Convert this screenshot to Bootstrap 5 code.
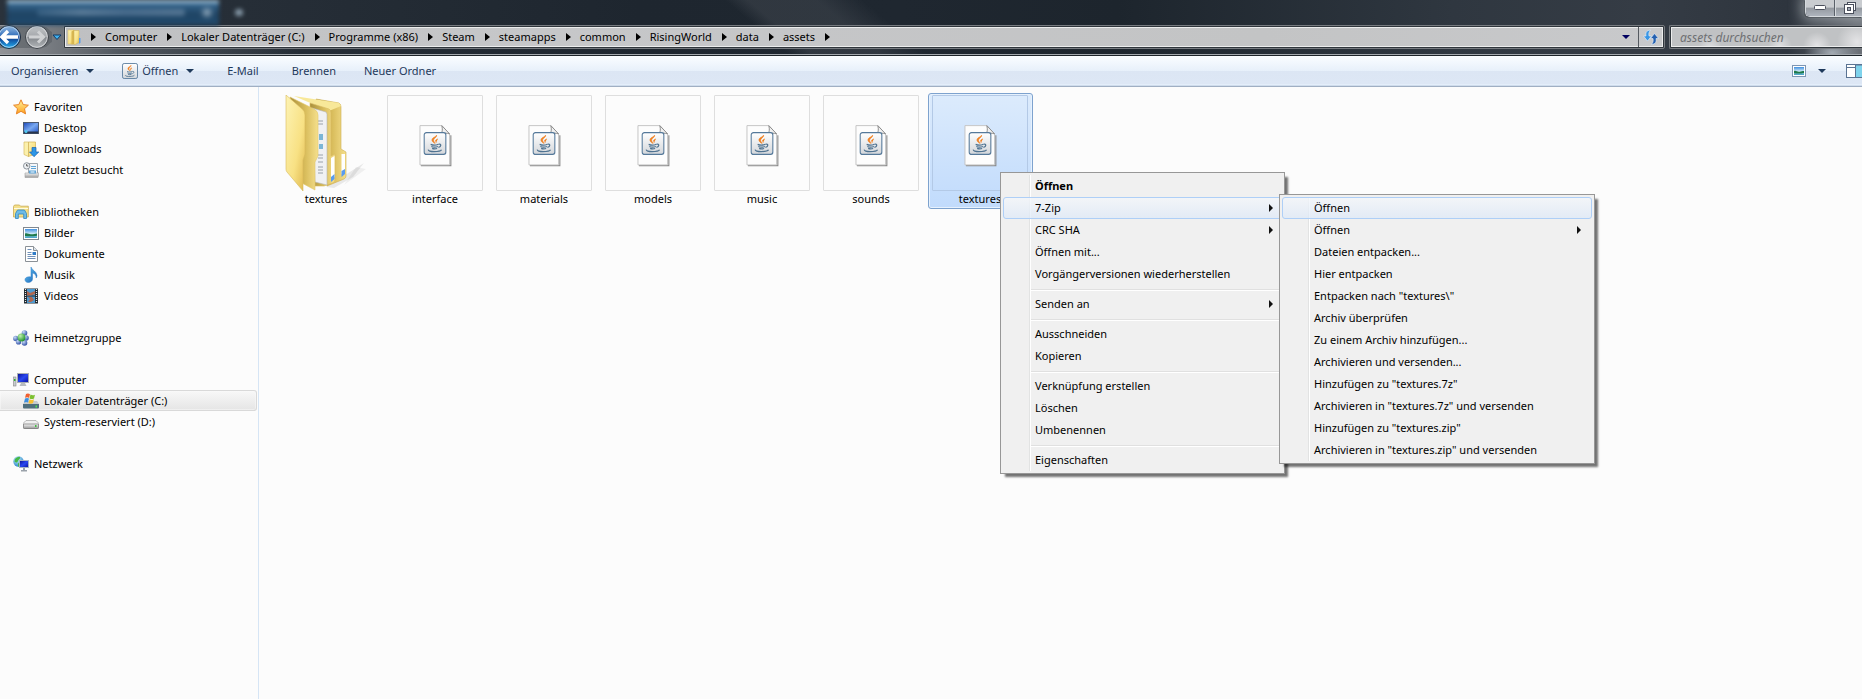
<!DOCTYPE html>
<html lang="de">
<head>
<meta charset="utf-8">
<meta name="viewport" content="width=device-width, initial-scale=1">
<title>assets</title>
<link href="https://cdn.jsdelivr.net/npm/bootstrap@5.3.0/dist/css/bootstrap.min.css" rel="stylesheet">
<style>
  body { font-family: "Noto Sans", "Open Sans", sans-serif; font-size: 11px; line-height: 16px; color: #000; background: #fcfcfc; }
  button { font: inherit; }
  svg { display: block; flex: none; }

  /* Glass frame */
  .glass { height: 56px; border-bottom: 1px solid #1c2329; background:
      radial-gradient(ellipse at 50% 60%, rgba(190,198,206,.75), transparent 65%) right 0 bottom -10px / 60px 30px repeat-x,
      linear-gradient(90deg, rgba(150,152,156,.95) 0, rgba(110,116,122,.6) 120px, rgba(60,68,76,0) 300px) 0 25px no-repeat,
      linear-gradient(40deg, transparent 0 38%, rgba(70,76,84,.45) 41% 50%, transparent 56%) 500px 0 / 700px 56px no-repeat,
      linear-gradient(90deg, #2a323b 0, #252d36 300px, #1e262f 640px, #1f2730 900px, #1d252d 60%, #2f3740 78%, #353c45 88%, #2e353e 96%, #6d7279 100%);
    background-repeat: no-repeat; }
  .glass::after { content: ""; height: 1px; background: #a3a8ad; margin-top: auto; }
  .title-strip { height: 25px; }
  .back-tab { width: 212px; height: 25px; margin-left: 7px; padding-left: 30px; filter: blur(2px); background: linear-gradient(#a9c8dc 0 2px, #34648c 4px, #1f4464 14px, #204a6d); }
  .back-text { width: 148px; height: 7px; border-radius: 3px; background: linear-gradient(90deg, #3c6588, #6c8ca8 30%, #57799a 60%, #6483a0 95%); opacity: .7; }
  .back-dot { width: 8px; height: 7px; border-radius: 4px; background: #a6bccd; filter: blur(2px); }
  .caption-btns { height: 17px; border: 1px solid #d6dade; border-width: 0 0 1px 1px; border-radius: 0 0 0 5px; box-shadow: 0 0 12px 4px rgba(190,195,200,.5), -1px 1px 0 #22282f; }
  .caption-btns button { width: 28px; height: 16px; background: linear-gradient(#c9ccd0 0 45%, #9499a0 50%, #aeb4bd); }
  .caption-btns button + button { border-left: 1px solid #5a6069 !important; box-shadow: inset 1px 0 #d6dade; }
  .nav-strip { height: 24px; }
  .nav-knobs { width: 63px; }
  .glass-box { height: 24px; border: 1px solid #777b80; border-radius: 2px; background: #30363c; padding: 1px; }
  .glass-inner { background: linear-gradient(90deg, #bfc0c2, #c6c7c9 30%, #c3c4c5 75%, #c8c9cb); border: 1px solid #eceded; }
  .search-glass { width: 193px; border-right: 0; border-radius: 2px 0 0 2px; padding-right: 0; }
  .search-glass .glass-inner { border-right: 0; background: radial-gradient(circle at 145px 18px, #e4e4e6 0, transparent 14px), radial-gradient(circle at 108px 18px, #dedfe1 0, transparent 12px), radial-gradient(circle at 38px 20px, #dedfe1 0, transparent 12px), radial-gradient(circle at 185px 14px, #e4e4e6 0, transparent 20px), #c0c2c4; }
  .search-glass input { font-size: 12px; font-style: italic; padding: 0 8px; min-height: 0; border: 0; background: none !important; box-shadow: none !important; }
  .search-glass input::placeholder { color: #6e7073; opacity: 1; }
  .crumb { padding: 0 10px 0 9px; color: #000; text-decoration: none; }
  .crumb-tri { width: 0; height: 0; border: 4px solid transparent; border-left: 5px solid #000; border-right: 0; }
  .down-tri { width: 0; height: 0; border: 4px solid transparent; border-top: 4px solid #1e395b; border-bottom: 0; }
  .down-tri.navy { border-top-color: #000060; }
  .refresh { width: 24px; height: 20px; border-left: 1px solid #555a60 !important; }

  /* Command bar */
  .cmd-bar { height: 31px; border-bottom: 1px solid #a0afc3; background: linear-gradient(#fafdff 0, #f0f6fd 8px, #e7f0fa 15px, #dce6f4 15px, #dde7f5 28px, #e4eefa 28px); box-shadow: inset 0 -1px #cfdcec; padding-left: 11px; }
  .cmd-bar button { color: #1e395b; }
  .cmd-bar .cmd-gap { margin-right: 28px; }
  .cmd-bar .cmd-wide { margin-right: 33px; }

  /* Navigation pane */
  .side { width: 259px; border-right: 1px solid #d6e5f5; padding-top: 9px; }
  .side ul { margin-bottom: 21px; }
  .side a { height: 21px; padding-left: 13px; gap: 5px; color: #000; text-decoration: none; }
  .side li li a { padding-left: 23px; }
  .side .picked { margin-right: 1px; border: 1px solid #d9d9d9; border-left: 0; border-radius: 0 3px 3px 0; background: linear-gradient(#f8f8f8, #e5e5e5); box-shadow: inset 0 0 0 1px #fafafa80; }

  /* Files */
  .files { padding: 6px 0 0 15px; gap: 4px; }
  .file { width: 105px; height: 116px; padding: 1px 4px 1px 3px; border: 1px solid transparent; border-radius: 3px; }
  .thumb { width: 96px; height: 96px; border: 1px solid #dedede; border-radius: 1px; }
  .thumb.bare { border: 0; }
  .file.chosen { border-color: #7da2ce; background: linear-gradient(#dcebfc, #c1dbfc); box-shadow: inset 0 0 0 1px #e6f1fd; }
  .file.chosen .thumb { border-color: #b3c9e6; }

  /* Context menus */
  .ctx { --bs-dropdown-font-size: 11px; left: 71px; top: 78px; width: 285px; padding: 2px; border: 1px solid #979797; border-radius: 0; color: #000;
    background: linear-gradient(90deg, transparent 26px, #e2e3e3 26px 27px, #fff 27px 28px, transparent 28px) content-box, #f0f0f0; box-shadow: 4px 4px 2px -1px rgba(0,0,0,.55); }
  .ctx .ctx { left: 276px; top: -3px; width: 316px; }
  .ctx .dropdown-item { height: 22px; padding: 0 8px 0 31px; border: 1px solid transparent; color: #000; line-height: 20px; }
  .ctx .ctx .dropdown-item { padding-right: 10px; }
  .ctx .dropdown-item.hot { border-color: #aecff7; border-radius: 3px; background: linear-gradient(rgba(243,246,250,.8), rgba(221,233,248,.7)); }
  .ctx .dropdown-divider { height: 2px; margin: 4px 0 2px 28px; border-top: 1px solid #e0e0e0; background: #fff; opacity: 1; }
  .ctx .crumb-tri { border-left-width: 4px; border-left-color: #111; }
</style>
</head>
<body class="d-flex flex-column vh-100 overflow-hidden">

<svg width="0" height="0" class="position-absolute" aria-hidden="true">
  <defs>
    <linearGradient id="gBack" x1="0" y1="0" x2="0" y2="1"><stop offset="0" stop-color="#9cc0e6"/><stop offset=".42" stop-color="#3a74bd"/><stop offset=".5" stop-color="#0c3488"/><stop offset="1" stop-color="#25b4f4"/></linearGradient>
    <linearGradient id="gFwd" x1="0" y1="0" x2="0" y2="1"><stop offset="0" stop-color="#c3c6c9"/><stop offset=".48" stop-color="#a5a8ac"/><stop offset=".52" stop-color="#83878c"/><stop offset="1" stop-color="#b4b8bb"/></linearGradient>
    <linearGradient id="gFolder" x1="0" y1="0" x2="1" y2="1"><stop offset="0" stop-color="#fdf3b4"/><stop offset=".6" stop-color="#f8e184"/><stop offset="1" stop-color="#dfb84e"/></linearGradient>
    <linearGradient id="gFolderD" x1="0" y1="0" x2="1" y2="0"><stop offset="0" stop-color="#a98f3c"/><stop offset=".55" stop-color="#d9bd5c"/><stop offset="1" stop-color="#f5df8c"/></linearGradient>
    <linearGradient id="gStar" x1="0" y1="0" x2="0" y2="1"><stop offset="0" stop-color="#fff3a0"/><stop offset="1" stop-color="#ffa11c"/></linearGradient>
    <linearGradient id="gScreen" x1="0" y1="0" x2="1" y2="1"><stop offset="0" stop-color="#1b46b8"/><stop offset=".5" stop-color="#78a8f0"/><stop offset="1" stop-color="#1c4cc0"/></linearGradient>
    <linearGradient id="gDark" x1="0" y1="0" x2="1" y2="1"><stop offset="0" stop-color="#0a0f90"/><stop offset=".5" stop-color="#2a48f0"/><stop offset="1" stop-color="#0a10a0"/></linearGradient>
    <linearGradient id="gMetal" x1="0" y1="0" x2="0" y2="1"><stop offset="0" stop-color="#f4f4f4"/><stop offset="1" stop-color="#9a9a9a"/></linearGradient>
    <linearGradient id="gArrow" x1="0" y1="0" x2="1" y2="1"><stop offset="0" stop-color="#6fd0fa"/><stop offset="1" stop-color="#0f58b0"/></linearGradient>
    <linearGradient id="gSky" x1="0" y1="0" x2="0" y2="1"><stop offset="0" stop-color="#3f8fe0"/><stop offset=".6" stop-color="#e4f6fb"/><stop offset=".7" stop-color="#8fd0e4"/><stop offset="1" stop-color="#3f9cc4"/></linearGradient>
    <linearGradient id="gJava" x1="0" y1="0" x2="0" y2="1"><stop offset="0" stop-color="#fff"/><stop offset="1" stop-color="#d3d6da"/></linearGradient>
    <radialGradient id="gBallB" cx=".35" cy=".3" r=".8"><stop offset="0" stop-color="#c8dcf8"/><stop offset="1" stop-color="#20409c"/></radialGradient>
    <radialGradient id="gBallG" cx=".35" cy=".3" r=".8"><stop offset="0" stop-color="#c0f0b0"/><stop offset="1" stop-color="#128a20"/></radialGradient>
    <radialGradient id="gGlobe" cx=".4" cy=".3" r=".8"><stop offset="0" stop-color="#c0f0f8"/><stop offset="1" stop-color="#1a78c8"/></radialGradient>
    <symbol id="photo" viewBox="0 0 12 9" preserveAspectRatio="none">
      <path d="M0 0h12v9H0z" fill="url(#gSky)"/><path d="M0 4.500c2-1 3.500.5 6 .8 2 .2 4-.8 6-.8v2.200c-4 .8-8 .8-12 .3z" fill="#1f7a4c"/>
    </symbol>
    <symbol id="java" viewBox="0 0 24 24">
      <rect x=".75" y=".75" width="22.5" height="22.5" rx="2.5" fill="url(#gJava)" stroke="#55799a" stroke-width="1.3"/>
      <path d="M13.6 3.4c.7 2.2-4.3 3.6-2.9 6.2.4.9 1 1.300 1 2.200-2-1.300-3.700-3-2.500-4.700 1.100-1.500 3.900-2.200 4.400-3.700zM15 7.200c-1.600.6-2.900 1.300-2.300 2.400.5.900.5 1.500-.1 2.100" fill="#f08020" stroke="#f08020" stroke-width=".7"/>
      <path d="M7.500 12.800c2 .9 6 .8 8-.1M8.200 15c2 .9 5 .8 6.800 0M9 17c1.600.7 3.800.6 5.200.1M15.700 12.700c3-.8 3 2.500-.2 3.200M5.300 18.200c-1.500 2.700 12.200 2.600 13.400.1" fill="none" stroke="#4f7391" stroke-width="1.300"/>
    </symbol>
    <symbol id="jar" viewBox="0 0 34 43">
      <path d="M2 42.300h30.800V11" fill="none" stroke="#8d8d8d" stroke-width="1.200"/>
      <path d="M1 1h22.500l8 8.500v32H1z" fill="#fdfdfd" stroke="#c4c4c4"/>
      <path d="M23.500 1c1 4 .5 6-.5 8.500 3-1 6-.8 8.500 0z" fill="#f0f0f0" stroke="#8a8a8a"/>
      <use href="#java" x="4.500" y="7.500" width="24" height="24"/>
    </symbol>
  </defs>
</svg>

<header class="glass d-flex flex-column flex-shrink-0">
  <div class="title-strip d-flex justify-content-between">
    <div class="d-flex align-items-center">
      <div class="back-tab d-flex align-items-center justify-content-between pe-2"><div class="back-text"></div><div class="back-dot"></div></div>
      <div class="back-dot ms-3 opacity-75"></div>
    </div>
    <div class="caption-btns d-flex overflow-hidden">
      <button class="border-0 p-0 d-flex align-items-center justify-content-center" aria-label="Minimieren"><svg width="12" height="6"><rect x=".5" y=".5" width="11" height="4" rx="1" fill="#fff" stroke="#4a4f5c"/></svg></button>
      <button class="border-0 p-0 d-flex align-items-center ps-1" aria-label="Verkleinern"><svg class="ms-1" width="14" height="14"><rect x="4.500" y="1.500" width="8" height="8" fill="#fff" stroke="#4a4f5c"/><rect x="1.500" y="3.500" width="9" height="9" fill="#fff" stroke="#4a4f5c"/><rect x="4.500" y="6.500" width="3" height="3" fill="#a4abb8" stroke="#4a4f5c"/></svg></button>
    </div>
  </div>
  <div class="nav-strip d-flex">
    <svg class="nav-knobs" height="24" viewBox="0 0 63 24" role="img" aria-label="Zurück und Vorwärts">
      <path d="M0 1h40c8 0 8 4 12 6v10c-4 2-4 6-12 6H0z" fill="#53595f" opacity=".55"/>
      <circle cx="9" cy="12" r="11.500" fill="url(#gBack)" stroke="#26303c"/><circle cx="9" cy="12" r="10.300" fill="none" stroke="#c4dcf2" stroke-width=".8"/>
      <path d="M8 6 2 12 8 18M2.500 12H18" fill="none" stroke="#fff" stroke-width="3.400"/>
      <circle cx="37" cy="12" r="11.500" fill="url(#gFwd)" stroke="#3f444a"/><circle cx="37" cy="12" r="10.300" fill="none" stroke="#dadcde" stroke-width=".8"/>
      <path d="M38 6.500 43.500 12 38 17.500M43 12H29" fill="none" stroke="#cfd1d3" stroke-width="3"/>
      <path d="M53 10h8l-4 4.500z" fill="#3fb2f0" stroke="#123a66"/>
    </svg>
    <div class="glass-box d-flex flex-fill">
      <nav class="glass-inner d-flex flex-fill align-items-center" aria-label="Adresse">
        <svg class="me-2" width="17" height="16" viewBox="0 0 17 16"><path d="M2 1h6v14H2z" fill="url(#gFolder)" stroke="#d8b95c" stroke-width=".5"/><path d="M5.500 2.500 8 1v14l-2.500.5z" fill="#d8b650"/><path d="M8 1.500h5v12L9 15.500H8z" fill="url(#gFolder)" stroke="#cfae4f" stroke-width=".5"/><path d="M13 9h1.500v4.500L13 15z" fill="#5a9be8"/></svg>
        <span class="crumb-tri"></span><a class="crumb" href="#">Computer</a>
        <span class="crumb-tri"></span><a class="crumb" href="#">Lokaler Datenträger (C:)</a>
        <span class="crumb-tri"></span><a class="crumb" href="#">Programme (x86)</a>
        <span class="crumb-tri"></span><a class="crumb" href="#">Steam</a>
        <span class="crumb-tri"></span><a class="crumb" href="#">steamapps</a>
        <span class="crumb-tri"></span><a class="crumb" href="#">common</a>
        <span class="crumb-tri"></span><a class="crumb" href="#">RisingWorld</a>
        <span class="crumb-tri"></span><a class="crumb" href="#">data</a>
        <span class="crumb-tri"></span><a class="crumb" href="#">assets</a>
        <span class="crumb-tri"></span>
        <button class="btn p-0 border-0 ms-auto px-1 me-1" aria-label="Verlauf"><span class="down-tri navy d-block"></span></button>
        <button class="refresh border-0 bg-transparent p-0 ps-1 d-flex align-items-center" aria-label="Aktualisieren">
          <svg width="16" height="16" viewBox="0 0 16 16"><path d="M7.500 1C3 1.500 2.500 4 3 7H.5l4 5 4-5H6C5.500 4.500 6 3 7.500 1z" fill="#3a96e4" stroke="#e8f2fb" stroke-width=".6"/><path d="M8.500 15.500c4.500-.5 5-3 4.500-6h2.500l-4-5-4 5H10c.5 2.500 0 4-1.500 6z" fill="#2460b0" stroke="#e8f2fb" stroke-width=".6"/></svg>
        </button>
      </nav>
    </div>
    <div class="glass-box search-glass d-flex ms-1">
      <div class="glass-inner d-flex flex-fill"><input class="form-control rounded-0 h-100" type="text" placeholder="assets durchsuchen" aria-label="assets durchsuchen"></div>
    </div>
  </div>
</header>

<div class="cmd-bar d-flex align-items-center flex-shrink-0" role="toolbar" aria-label="Befehle">
  <button class="border-0 bg-transparent p-0 d-flex align-items-center cmd-gap gap-2 flex-shrink-0">Organisieren<span class="down-tri"></span></button>
  <button class="border-0 bg-transparent p-0 d-flex align-items-center cmd-wide flex-shrink-0"><svg class="me-1" width="16" height="16"><use href="#java"/></svg>Öffnen<span class="down-tri ms-2"></span></button>
  <button class="border-0 bg-transparent p-0 cmd-wide flex-shrink-0">E-Mail</button>
  <button class="border-0 bg-transparent p-0 cmd-gap flex-shrink-0">Brennen</button>
  <button class="border-0 bg-transparent p-0 flex-shrink-0">Neuer Ordner</button>
  <button class="border-0 bg-transparent p-0 ms-auto me-3 d-flex align-items-center" aria-label="Ansicht ändern"><svg class="me-2" width="14" height="12"><rect x=".5" y=".5" width="13" height="11" fill="#fff" stroke="#7c96b4"/><use href="#photo" x="2" y="2" width="10" height="8"/></svg><span class="down-tri ms-1"></span></button>
  <button class="border-0 bg-transparent p-0 ms-1" aria-label="Vorschaufenster"><svg width="16" height="14"><rect x=".5" y=".5" width="20" height="13" fill="#fff" stroke="#5a7392"/><path d="M1 3.500h15" stroke="#5a7392"/><path d="M9.500 1v12" stroke="#5a7392"/><rect x="10" y="1" width="6" height="12" fill="#7fd3ec"/><path d="M10 1h6" stroke="#5a7392"/></svg></button>
</div>

<main class="d-flex flex-fill">
  <nav class="side flex-shrink-0" aria-label="Navigation">
    <ul class="list-unstyled"><li>
      <a href="#" class="d-flex align-items-center"><svg width="16" height="16"><path d="m8 .8 2.200 4.800 5.200.6-3.900 3.500 1.100 5.200L8 12.300l-4.600 2.600 1.100-5.200L.6 6.200l5.200-.6z" fill="url(#gStar)" stroke="#e8852a"/></svg>Favoriten</a>
      <ul class="list-unstyled">
        <li><a href="#" class="d-flex align-items-center"><svg width="16" height="16"><rect x=".5" y="2.500" width="15" height="11" fill="url(#gScreen)" stroke="#4c5a70"/><path d="M1 11.500h14v2H1z" fill="#27344c"/><circle cx="3" cy="11.500" r="1.500" fill="#50c8f0"/></svg>Desktop</a></li>
        <li><a href="#" class="d-flex align-items-center"><svg width="16" height="16"><path d="M1 1h4.500v14.500L1 13.500z" fill="#fbf0ac" stroke="#d9bc62" stroke-width=".7"/><path d="M5.500 1h7v12l-7 2.500z" fill="url(#gFolder)" stroke="#d0b055" stroke-width=".7"/><path d="M9 6.500h4V11h2.800L11 15.700 6.500 11H9z" fill="#2d96e6" stroke="#1a62b0" stroke-width=".7"/></svg>Downloads</a></li>
        <li><a href="#" class="d-flex align-items-center"><svg width="16" height="16"><path d="M5.500 1.500h9v10h-9z" fill="#f4f7fa" stroke="#9da5ad"/><path d="M8 4.500h5M8 6.500h5" stroke="#5da4d8"/><path d="M2 11h14l-1 4.500H2z" fill="url(#gMetal)" stroke="#a0a0a0" stroke-width=".6"/><path d="M6 8.500h7v3H6z" fill="#5da4d8"/><path d="M7.500 9.500h4v1h-4z" fill="#fff"/><circle cx="3.700" cy="3.900" r="3.200" fill="#eef1f4" stroke="#8d959d"/><path d="M3.700 2v2h1.600" fill="none" stroke="#555"/></svg>Zuletzt besucht</a></li>
      </ul>
    </li></ul>
    <ul class="list-unstyled"><li>
      <a href="#" class="d-flex align-items-center"><svg width="16" height="16"><path d="M.5 2.500 1.500 1h5l1 1.200h7.800V13H.5z" fill="#f5e08a" stroke="#c9ab52" stroke-width=".8"/><path d="M1 4.500h14" stroke="#fffbe0"/><path d="M2.500 14.500V9.500l2-3.500h7l2 3.500v5h-2.800V10H5.300v4.500z" fill="#6ebbe6" stroke="#2f86c0" stroke-width=".8"/></svg>Bibliotheken</a>
      <ul class="list-unstyled">
        <li><a href="#" class="d-flex align-items-center"><svg width="16" height="16"><rect x=".5" y="2.500" width="15" height="12" fill="#fff" stroke="#808890"/><use href="#photo" x="2" y="4" width="12" height="9"/></svg>Bilder</a></li>
        <li><a href="#" class="d-flex align-items-center"><svg width="16" height="16"><path d="M2.500.5h8l4 4v11h-12z" fill="#fff" stroke="#8a9096"/><path d="M10.500.5v4h4" fill="#dde4ea" stroke="#8a9096"/><path d="M4.500 3.500h4M4.500 6.500h4M4.500 8.500h4M4.500 10.500h8M4.500 12.500h8" stroke="#7090b8"/><path d="M9.500 6h3.500v3H9.500z" fill="#2f7cc8"/></svg>Dokumente</a></li>
        <li><a href="#" class="d-flex align-items-center"><svg width="16" height="16"><path d="M8 0c.5 3 5.500 4 6 8.500 0 1-.4 1.800-.8 2.500.2-3-1.500-4.500-3.700-5V12c0 2-2 3.500-4.200 3.500S2 14.200 2 12.600C2 10.500 5 9.300 8 10z" fill="url(#gArrow)" stroke="#2a7cc8" stroke-width=".5"/></svg>Musik</a></li>
        <li><a href="#" class="d-flex align-items-center"><svg width="16" height="16"><path d="M1 .5h14v15H1z" fill="#222a30"/><path d="M4 1h8v6.500H4zM4 8.500h8V15H4z" fill="#4e9ad0"/><path d="m4 3 3 2 5-2v3L8 7.500H4zM5 9h4l2 3-3 2H5l2-3z" fill="#b06850"/><path d="M2.500 1v14M13.500 1v14" stroke="#e8e8e8" stroke-width="1.200" stroke-dasharray="1 1"/></svg>Videos</a></li>
      </ul>
    </li></ul>
    <ul class="list-unstyled"><li>
      <a href="#" class="d-flex align-items-center"><svg width="16" height="16"><circle cx="11.500" cy="3" r="2.800" fill="url(#gBallB)"/><circle cx="2.800" cy="8.500" r="2.700" fill="url(#gBallB)"/><circle cx="13" cy="8" r="2.800" fill="url(#gBallB)"/><circle cx="5.500" cy="12" r="2.600" fill="url(#gBallB)"/><circle cx="11.500" cy="13" r="2.800" fill="url(#gBallB)"/><circle cx="8.500" cy="7.500" r="3.900" fill="url(#gBallG)"/></svg>Heimnetzgruppe</a>
    </li></ul>
    <ul class="list-unstyled"><li>
      <a href="#" class="d-flex align-items-center"><svg width="16" height="16"><rect x="4.500" y="1.500" width="11" height="9" fill="url(#gDark)" stroke="#a9adb2"/><path d="M8 11h4l1.500 3h-7z" fill="#b8bcc0"/><rect x=".5" y="5" width="2.500" height="9" fill="#c8ccd0" stroke="#888" stroke-width=".6"/><path d="M1 7h1.500v2H1z" fill="#30b030"/></svg>Computer</a>
      <ul class="list-unstyled">
        <li><a href="#" class="d-flex align-items-center picked"><svg width="16" height="16"><path d="M2 8h12l2 3H0z" fill="#c4cacf"/><path d="M0 11h16v3.500q0 1-1 1H1q-1 0-1-1z" fill="#4f6f7d"/><path d="M12.500 12.500h1.500v2h-1.500z" fill="#50e050"/><path d="M3 1c1.500-1 3-.6 4 .2L6 5C5 4 3.500 4 2 4.800z" fill="#f06030"/><path d="M7.500 1.500c1.500 1 3 1 4.500.2L11 5.500c-1.500.8-3 .7-4.500 0z" fill="#7cc030"/><path d="M2 5.500c1.500-.8 2.800-.7 4 0L5 9.500C4 8.700 2.500 8.700 1 9.500z" fill="#3c90e0"/><path d="M6.500 6.200c1.500.9 3 .9 4.500.1L10 10c-1.500.9-3 .8-4.500 0z" fill="#f8c030"/></svg>Lokaler Datenträger (C:)</a></li>
        <li><a href="#" class="d-flex align-items-center"><svg width="16" height="16"><path d="M3 6.500h10l3 3V13q0 1.500-1.500 1.500h-13Q0 14.500 0 13V9.500z" fill="#f0f0f0" stroke="#a0a0a0" stroke-width=".7"/><path d="M.5 10h15v3.500q0 1-1 1h-13q-1 0-1-1z" fill="url(#gMetal)" stroke="#777" stroke-width=".7"/><path d="M12 11h1.500v2H12z" fill="#40c040"/></svg>System-reserviert (D:)</a></li>
      </ul>
    </li></ul>
    <ul class="list-unstyled"><li>
      <a href="#" class="d-flex align-items-center"><svg width="16" height="16"><circle cx="5.500" cy="5.500" r="5.200" fill="url(#gGlobe)"/><path d="M2 3c2-2 4-2.500 5-2 .5 2-1 2-2 4s-2 2-3.500.5zM5 7l3 1-1 2.500H5z" fill="#46b848"/><rect x="6.500" y="4.500" width="9" height="7" fill="url(#gDark)" stroke="#a8b4c4"/><path d="M10 12h2v2h2v1.500H8V14h2z" fill="#9aa2aa"/></svg>Netzwerk</a>
    </li></ul>
  </nav>

  <section class="files d-flex flex-wrap align-content-start flex-fill" aria-label="Dateien">
    <div class="file d-flex flex-column align-items-center">
      <div class="thumb bare"><svg width="96" height="96" viewBox="-8 0 96 96">
        <path d="M40 92 78 68 67 82 48 93z" fill="#000" opacity=".08"/><path d="M58 90 80 74l-10-2z" fill="#000" opacity=".05"/>
        <path d="M30 4 53 8q2 1 2 4v42l5 3v24q0 2-2 3L41 91z" fill="url(#gFolderD)" stroke="#cfae50" stroke-width=".6"/>
        <path d="M8 1 53 8l2 3-12 5z" fill="#f8e899"/>
        <path d="M55.500 59h3.500v17l-3.500 3z" fill="#fff"/><path d="M55.500 76l3.500-2v5l-3.500 3z" fill="#5a9cf0"/>
        <path d="M24 8 43 14q2 1 2 4v43l4-2v25q0 3-2 4l-9 3H24z" fill="url(#gFolderD)" stroke="#d8bb60" stroke-width=".6"/>
        <path d="M26 13 40 17l1 2v71l-12-3z" fill="#f0f1f3" stroke="#b7b7b7" stroke-width=".6"/>
        <path d="M32 26h5M32 29h5M32 60h5M32 63h5M32 67h5M32 72h5M32 75h5M32 78h5" stroke="#9aa2aa"/><path d="M33 39h4v6h-4zM33 49h4v5h-4z" fill="#7cb6d6"/>
        <path d="M45 63l3.500-2v21L45 86z" fill="#fff"/><path d="M45 82l3.500-3v5L45 87z" fill="#5a9cf0"/>
        <path d="M4 2 28 14q4 2 4 6v41l-3 6v28L12 86z" fill="url(#gFolderD)" stroke="#e3c768" stroke-width=".6"/>
        <path d="M0 0 15 13q4 3 4 7v39l-2 6v31L1 77Q0 76 0 74z" fill="url(#gFolder)" stroke="#d9bb5c" stroke-width=".6"/>
      </svg></div>textures</div>
    <div class="file d-flex flex-column align-items-center"><div class="thumb d-flex align-items-center justify-content-center pt-1"><svg width="33" height="43"><use href="#jar"/></svg></div>interface</div>
    <div class="file d-flex flex-column align-items-center"><div class="thumb d-flex align-items-center justify-content-center pt-1"><svg width="33" height="43"><use href="#jar"/></svg></div>materials</div>
    <div class="file d-flex flex-column align-items-center"><div class="thumb d-flex align-items-center justify-content-center pt-1"><svg width="33" height="43"><use href="#jar"/></svg></div>models</div>
    <div class="file d-flex flex-column align-items-center"><div class="thumb d-flex align-items-center justify-content-center pt-1"><svg width="33" height="43"><use href="#jar"/></svg></div>music</div>
    <div class="file d-flex flex-column align-items-center"><div class="thumb d-flex align-items-center justify-content-center pt-1"><svg width="33" height="43"><use href="#jar"/></svg></div>sounds</div>
    <div class="file chosen d-flex flex-column align-items-center position-relative"><div class="thumb d-flex align-items-center justify-content-center pt-1"><svg width="33" height="43"><use href="#jar"/></svg></div>textures
      <ul class="dropdown-menu show ctx">
        <li><button class="dropdown-item fw-bold">Öffnen</button></li>
        <li class="position-relative"><button class="dropdown-item hot d-flex align-items-center justify-content-between">7-Zip<span class="crumb-tri"></span></button>
          <ul class="dropdown-menu show ctx">
            <li><button class="dropdown-item hot">Öffnen</button></li>
            <li><button class="dropdown-item d-flex align-items-center justify-content-between">Öffnen<span class="crumb-tri"></span></button></li>
            <li><button class="dropdown-item">Dateien entpacken...</button></li>
            <li><button class="dropdown-item">Hier entpacken</button></li>
            <li><button class="dropdown-item">Entpacken nach "textures\"</button></li>
            <li><button class="dropdown-item">Archiv überprüfen</button></li>
            <li><button class="dropdown-item">Zu einem Archiv hinzufügen...</button></li>
            <li><button class="dropdown-item">Archivieren und versenden...</button></li>
            <li><button class="dropdown-item">Hinzufügen zu "textures.7z"</button></li>
            <li><button class="dropdown-item">Archivieren in "textures.7z" und versenden</button></li>
            <li><button class="dropdown-item">Hinzufügen zu "textures.zip"</button></li>
            <li><button class="dropdown-item">Archivieren in "textures.zip" und versenden</button></li>
          </ul>
        </li>
        <li><button class="dropdown-item d-flex align-items-center justify-content-between">CRC SHA<span class="crumb-tri"></span></button></li>
        <li><button class="dropdown-item">Öffnen mit...</button></li>
        <li><button class="dropdown-item">Vorgängerversionen wiederherstellen</button></li>
        <li><hr class="dropdown-divider"></li>
        <li><button class="dropdown-item d-flex align-items-center justify-content-between">Senden an<span class="crumb-tri"></span></button></li>
        <li><hr class="dropdown-divider"></li>
        <li><button class="dropdown-item">Ausschneiden</button></li>
        <li><button class="dropdown-item">Kopieren</button></li>
        <li><hr class="dropdown-divider"></li>
        <li><button class="dropdown-item">Verknüpfung erstellen</button></li>
        <li><button class="dropdown-item">Löschen</button></li>
        <li><button class="dropdown-item">Umbenennen</button></li>
        <li><hr class="dropdown-divider"></li>
        <li><button class="dropdown-item">Eigenschaften</button></li>
      </ul>
    </div>
  </section>
</main>

<script src="https://cdn.jsdelivr.net/npm/bootstrap@5.3.0/dist/js/bootstrap.bundle.min.js"></script>
</body>
</html>
